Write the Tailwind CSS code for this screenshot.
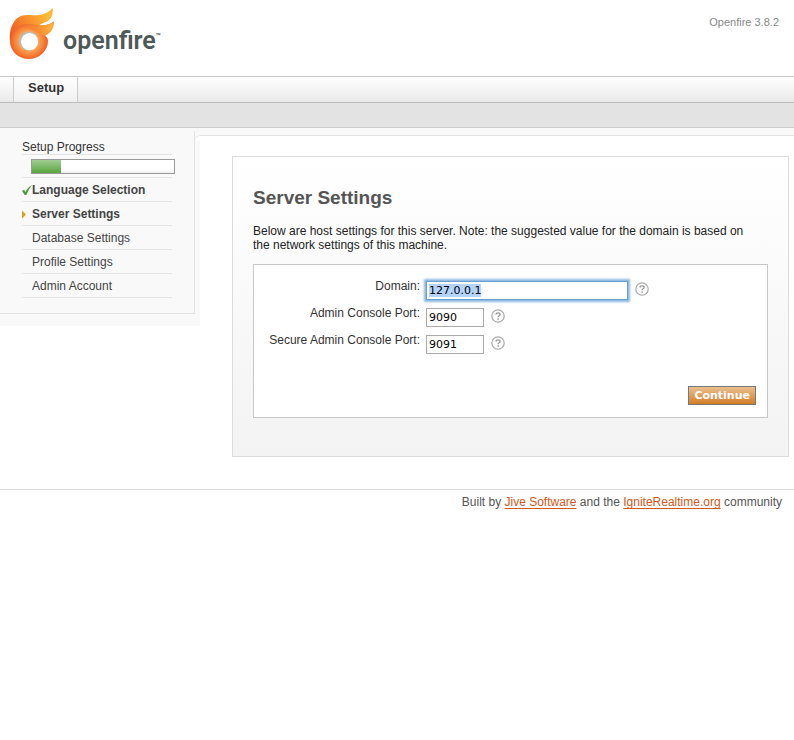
<!DOCTYPE html>
<html lang="en">
<head>
<meta charset="utf-8">
<meta name="viewport" content="width=device-width, initial-scale=1">
<title>Openfire Setup: Server Settings</title>
<script src="https://cdn.jsdelivr.net/npm/@tailwindcss/browser@4"></script>
</head>
<body class="min-h-screen bg-white font-['Liberation_Sans',Arial,sans-serif] text-xs text-[#333]">

<svg class="hidden" aria-hidden="true">
  <symbol id="help" viewBox="0 0 14 14">
    <circle cx="7" cy="7" r="6.2" fill="#fff" stroke="#aaa" stroke-width="1.2"/>
    <path d="M4.9 5.6C5 4.4 5.8 3.900 7 3.900s2.100.6 2.100 1.600c0 1.300-2 1.300-2 2.800" fill="none" stroke="#999" stroke-width="1.3"/>
    <path d="M6.400 9.300h1.400v1.400H6.400z" fill="#999"/>
  </symbol>
</svg>

<header>
  <div class="flex h-19 items-start justify-between pr-[15px]">
    <div class="flex items-start">
      <svg class="h-16 w-15" viewBox="0 0 60 64" aria-hidden="true">
        <defs>
          <linearGradient id="back" gradientUnits="userSpaceOnUse" x1="10" y1="36" x2="46" y2="14">
            <stop offset="0" stop-color="#ee5522"/><stop offset=".45" stop-color="#f5852a"/><stop offset="1" stop-color="#fdb934"/>
          </linearGradient>
          <radialGradient id="ring" gradientUnits="userSpaceOnUse" cx="29" cy="41" r="20">
            <stop offset=".45" stop-color="#fba95a"/><stop offset=".7" stop-color="#f78438"/><stop offset="1" stop-color="#ef5422"/>
          </radialGradient>
          <linearGradient id="front" gradientUnits="userSpaceOnUse" x1="22" y1="32" x2="50" y2="26">
            <stop offset="0" stop-color="#f57030" stop-opacity="0"/><stop offset=".6" stop-color="#f88f34"/><stop offset="1" stop-color="#fdad38"/>
          </linearGradient>
        </defs>
        <path d="M10 41C9 26 15 15 27 15C33 14.500 37 16 41.500 14.500C46 13.500 49.500 11.500 52.700 8C53.500 14 51 19.500 47 21.500C44.500 22.500 42 23 39 25.500L31 30L12 38Z" fill="url(#back)"/>
        <path d="M10 41C11 31 18 24 28 24C33 24 37 25.800 42 25.300C47 25 51 24 54 21.300C53.500 28 51 33 45 35.500C47 37 48 39 48 41C48 51 39 59 29 59C18 59 10 51 10 41Z" fill="url(#ring)"/>
        <path d="M16 28C20 25 24 24 28 24C33 24 37 25.800 42 25.300C47 25 51 24 54 21.300C53.500 28 51 33 45 35.500C41 36 37 31 31 30C26 29 21 29 16 28Z" fill="url(#front)"/>
        <circle cx="28.600" cy="41" r="9.600" fill="#b9bcbb"/>
        <circle cx="29.600" cy="41.600" r="8.600" fill="#fff"/>
      </svg>
      <span class="mt-[27px] ml-[3px] flex font-[Roboto,sans-serif] text-[25px] leading-7 font-semibold text-[#4d5857]">openfire<span class="text-[8px] leading-5">™</span></span>
    </div>
    <p class="mt-4 text-[11px] leading-3 text-[#888]">Openfire 3.8.2</p>
  </div>
  <nav class="flex h-[27px] border-y border-t-[#c9c9c9] border-b-[#bbb] bg-linear-to-b from-white to-[#e9e9e9] pl-[13px]">
    <a href="#" class="border-x border-[#ccc] bg-linear-to-b from-white to-[#f0f0f0] pt-[3px] pr-[13px] pl-[14px] text-[13px] leading-4 font-bold text-[#333]">Setup</a>
  </nav>
  <div class="h-[25px] border-b border-[#ccc] bg-[#e3e3e3]"></div>
</header>

<div class="bg-[#f9f9f9] pt-[3px]">
  <div class="flex items-start bg-white">
    <aside class="relative z-10 grid w-[200px] shrink-0 grid-cols-[1fr_5px] grid-rows-[1fr_12px]">
      <div class="border-r border-b border-[#e2e2e2] bg-[#f9f9f9] pt-2 pb-[15px] pl-[22px]">
        <div class="w-[150px]">
          <h2 class="border-b border-[#e4e4e4] pt-px leading-[14px]">Setup Progress</h2>
          <div class="border-b border-[#e4e4e4] pt-1 pb-[3px] pl-[9px]">
            <div class="h-[15px] w-[144px] border border-[#999] bg-linear-to-b from-white from-70% to-[#eee]" role="progressbar" aria-label="Setup Progress" aria-valuenow="20" aria-valuemin="0" aria-valuemax="100">
              <div class="h-full w-[29px] bg-linear-to-b from-[#a0ce92] to-[#58a53b]"></div>
            </div>
          </div>
          <ul class="text-[#444]">
            <li class="flex h-6 items-center border-b border-[#e4e4e4] font-bold">
              <svg class="h-3 w-[10px]" viewBox="0 0 10 12" aria-hidden="true"><path d="M0 7L2 5.800L3.500 8C5 5 7 2.500 10 1C7.500 4 6 7 4.300 11H2.800Z" fill="#4a9c3a"/></svg>
              <a href="#">Language Selection</a>
            </li>
            <li class="flex h-6 items-center border-b border-[#e4e4e4] font-bold">
              <svg class="h-3 w-[10px]" viewBox="0 0 10 12" aria-hidden="true"><path d="M0 2.500L4 6.500L0 10.500Z" fill="#d9a21b"/></svg>
              <a href="#">Server Settings</a>
            </li>
            <li class="flex h-6 items-center border-b border-[#e4e4e4] pl-[10px]">Database Settings</li>
            <li class="flex h-6 items-center border-b border-[#e4e4e4] pl-[10px]">Profile Settings</li>
            <li class="flex h-6 items-center border-b border-[#e4e4e4] pl-[10px]">Admin Account</li>
          </ul>
        </div>
      </div>
      <div class="mt-[10px] bg-[#f9f9f9]"></div>
      <div class="col-span-2 bg-[#f9f9f9]"></div>
    </aside>

    <div class="-ml-[5px] min-w-0 grow bg-[#f9f9f9] pt-1">
      <div class="rounded-tl-md border-t border-[#e2e2e2] bg-white pt-5 pr-[5px] pb-8 pl-[37px]">
        <main class="border border-[#dcdcdc] bg-linear-to-b from-white to-[#f3f3f3] px-5 pt-[29px] pb-[38px]">
          <h1 class="text-[19px] leading-6 font-bold text-[#555]">Server Settings</h1>
          <p class="mt-[14px] pr-4 leading-[14px] text-[#222]">Below are host settings for this server. Note: the suggested value for the domain is based on the network settings of this machine.</p>
          <form class="mt-3 border border-[#c8c8c8] bg-white px-[11px] pt-[15px] pb-3">
            <div class="grid auto-rows-[27px] grid-cols-[155px_1fr] items-start gap-x-[6px]">
              <label for="domain" class="text-right leading-3">Domain:</label>
              <div class="flex items-start gap-[7px] pt-px">
                <input id="domain" type="text" value="127.0.0.1" class="h-[19px] w-[202px] border border-[#6a9fd0] bg-white px-[2px] font-['DejaVu_Sans',Verdana,sans-serif] text-[11px] text-black shadow-[0_0_2px_2px_#8db8e0] outline-none selection:bg-[#b3d4fd] selection:text-black">
                <button type="button" class="pt-px" aria-label="Help for domain"><svg class="size-[14px]"><use href="#help"/></svg></button>
              </div>
              <label for="port" class="text-right leading-3">Admin Console Port:</label>
              <div class="flex items-start gap-[7px] pt-px">
                <input id="port" type="text" value="9090" class="h-[19px] w-[58px] border border-[#aaa] bg-white px-[2px] font-['DejaVu_Sans',Verdana,sans-serif] text-[11px] text-black">
                <button type="button" class="pt-px" aria-label="Help for admin console port"><svg class="size-[14px]"><use href="#help"/></svg></button>
              </div>
              <label for="secure" class="text-right leading-3 whitespace-nowrap">Secure Admin Console Port:</label>
              <div class="flex items-start gap-[7px] pt-px">
                <input id="secure" type="text" value="9091" class="h-[19px] w-[58px] border border-[#aaa] bg-white px-[2px] font-['DejaVu_Sans',Verdana,sans-serif] text-[11px] text-black">
                <button type="button" class="pt-px" aria-label="Help for secure admin console port"><svg class="size-[14px]"><use href="#help"/></svg></button>
              </div>
            </div>
            <div class="mt-[25px] flex justify-end">
              <button type="submit" class="h-[19px] border border-[#777] bg-linear-to-b from-[#e9bf8d] to-[#d27c1c] px-[5px] font-['DejaVu_Sans',Verdana,sans-serif] text-[11px] leading-4 font-bold text-white">Continue</button>
            </div>
          </form>
        </main>
      </div>
    </div>
  </div>
</div>

<footer class="border-t border-[#d8d8d8] bg-white pt-[5px] pr-3 text-right leading-[14px] text-[#555]">
  Built by <a href="#" class="text-[#d1581a] underline underline-offset-2">Jive Software</a> and the <a href="#" class="text-[#d1581a] underline underline-offset-2">IgniteRealtime.org</a> community
</footer>

<script>
  const domain = document.getElementById('domain');
  domain.focus();
  domain.select();
</script>
</body>
</html>
